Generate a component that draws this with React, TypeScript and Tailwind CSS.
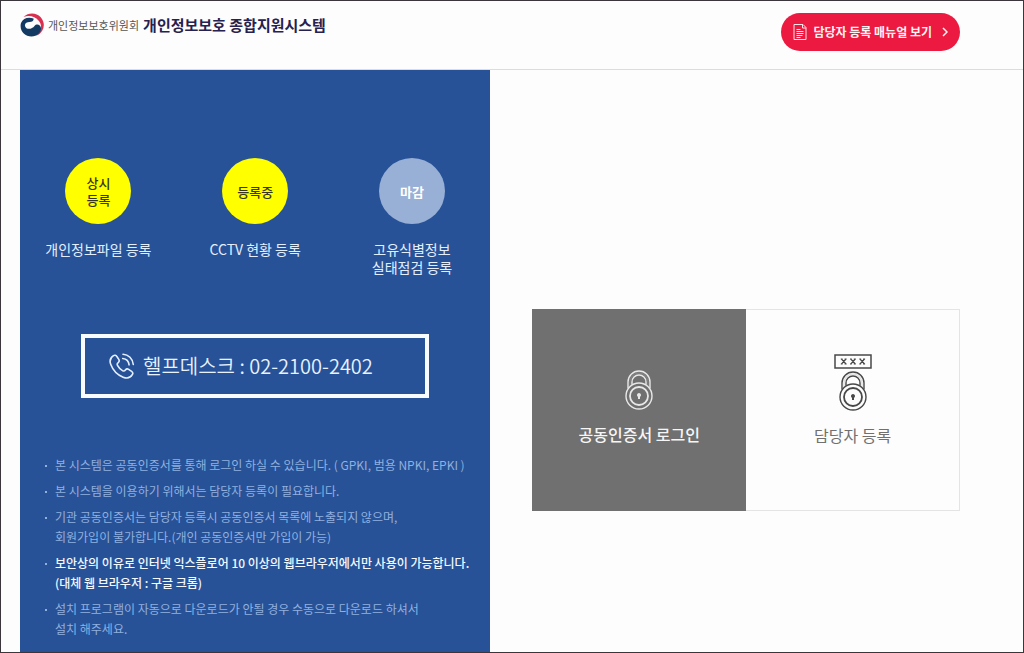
import type { ReactNode } from "react";

type Status = { badge: ReactNode; label: ReactNode; open: boolean };

const statuses: Status[] = [
  { badge: <>상시<br />등록</>, label: "개인정보파일 등록", open: true },
  { badge: "등록중", label: "CCTV 현황 등록", open: true },
  { badge: "마감", label: <>고유식별정보<br />실태점검 등록</>, open: false },
];

const notices: { text: ReactNode; strong?: boolean }[] = [
  { text: "본 시스템은 공동인증서를 통해 로그인 하실 수 있습니다. ( GPKI, 범용 NPKI, EPKI )" },
  { text: "본 시스템을 이용하기 위해서는 담당자 등록이 필요합니다." },
  { text: <>기관 공동인증서는 담당자 등록시 공동인증서 목록에 노출되지 않으며,<br />회원가입이 불가합니다.(개인 공동인증서만 가입이 가능)</> },
  { text: <>보안상의 이유로 인터넷 익스플로어 10 이상의 웹브라우저에서만 사용이 가능합니다.<br />(대체 웹 브라우저 : 구글 크롬)</>, strong: true },
  { text: <>설치 프로그램이 자동으로 다운로드가 안될 경우 수동으로 다운로드 하셔서<br />설치 해주세요.</> },
];

function Emblem() {
  return (
    <svg viewBox="0 0 48 48" className="size-6 shrink-0" aria-hidden="true">
      <path d="M7 8C17-2 33-1 41 8c11 12 8 28-6 37 8-10 10-21 2-30C30 7 19 4 7 8Z" fill="#d9304f" />
      <path d="M27 11C17 7 6 10 2 20-2 35 9 47 23 47c12 0 20-8 19-17-1-7-9-9-13-4-5 7-17 8-19 0-1-6 4-8 9-8 6 0 9-3 8-7Z" fill="#133a63" />
    </svg>
  );
}

function DocumentIcon() {
  return (
    <svg viewBox="0 0 14 18" className="h-[18px] w-3.5" fill="none" stroke="#ffe3e8" aria-hidden="true">
      <path d="M1 1.5h9l3 3v12H1zM9.5 1.5V5H13M3.5 6.5h4M3.5 8.5h7M3.5 10.5h7M3.5 12.5h6M3.5 14.5h4" />
    </svg>
  );
}

function PhoneIcon() {
  return (
    <svg viewBox="0 0 26 26" className="size-[26px]" fill="none" stroke="#e4f0ff" strokeWidth="1.6" strokeLinecap="round" strokeLinejoin="round" aria-hidden="true">
      <path d="M4.5 2.7C1.2 4.8.4 8 1.8 11.5c2 5.4 6.7 10.4 12.3 12.7 3.8 1.500 7.300.7 9.200-2.500.8-1.300.5-2.500-.7-3.300l-3-2c-1.200-.8-2.300-.5-3.200.6-.8 1.100-1.700 1.300-2.900.6-2.200-1.300-3.900-3.100-5-5.200-.6-1.200-.4-2 .7-2.800 1.100-.9 1.300-2 .6-3.200L7.700 3.300C7 2.200 5.700 1.900 4.500 2.700Z" />
      <path d="M14 1.200c5.500.3 9.700 4.500 10.300 10.300M13.700 5.500c3.800.4 6 2.700 6.400 6.400" />
    </svg>
  );
}

function PadlockIcon({ className }: { className: string }) {
  return (
    <svg viewBox="0 0 28 40" className={"h-10 w-7 " + className} fill="none" stroke="currentColor" strokeWidth="1.4" aria-hidden="true">
      <path d="M3 18.500V12a11 11 0 0 1 22 0v6.500M7 14.800V12a7 7 0 0 1 14 0v2.800" />
      <path d="M5 16v-4a9 9 0 0 1 18 0v4" strokeOpacity=".15" />
      <circle cx="14" cy="26" r="13" />
      <circle cx="14" cy="26" r="9" strokeWidth="1.800" />
      <path d="M14 23a2.100 2.100 0 0 0-1 3.900V29h2v-2.100A2.100 2.100 0 0 0 14 23Z" fill="currentColor" stroke="none" />
    </svg>
  );
}

function PasswordIcon() {
  return (
    <svg viewBox="0 0 38 15" className="h-[15px] w-[38px] text-[#484848]" fill="none" stroke="currentColor" strokeWidth="1.5" aria-hidden="true">
      <path d="M1 1h36v13H1z" />
      <path d="M7.500 5l4.500 5m0-5-4.500 5M6.800 5h1.800m2 0h2M6.800 10h1.800m2 0h2M16.800 5l4.500 5m0-5-4.500 5M16 5h1.800m2 0h2M16 10h1.800m2 0h2M26 5l4.500 5m0-5L26 10M25.300 5h1.800m2 0h2M25.300 10h1.800m2 0h2" strokeWidth="1.200" />
    </svg>
  );
}

export default function App() {
  return (
    <div className="flex min-h-screen flex-col border border-[#3b363b] bg-[#fdfdfd] font-['Noto_Sans_CJK_KR',sans-serif]">
      <header className="flex items-start justify-between border-b border-[#dcdcdc] pt-3 pr-[63px] pb-[18px] pl-[19px]">
        <a href="#home" className="flex items-center whitespace-nowrap">
          <Emblem />
          <span className="ml-1 text-[11px] leading-6 text-[#555]">개인정보보호위원회</span>
          <h1 className="ml-1 text-[15px] leading-6 font-bold text-[#252150]">개인정보보호 종합지원시스템</h1>
        </a>
        <a href="#manual" className="flex h-[38px] items-center rounded-full bg-[#ec1a40] px-3 text-xs font-bold whitespace-nowrap text-[#fff3f4]">
          <DocumentIcon />
          <span className="ml-1.5">담당자 등록 매뉴얼 보기</span>
          <svg viewBox="0 0 6 10" className="ml-2.5 h-2.5 w-1.5" fill="none" stroke="currentColor" strokeWidth="1.500" aria-hidden="true">
            <path d="M1 1l4 4-4 4" />
          </svg>
        </a>
      </header>

      <main className="flex grow pl-[19px]">
        <section className="w-[46.9%] shrink-0 bg-[#275298] pt-[88px] pb-3">
          <ul className="grid grid-cols-3">
            {statuses.map((s, i) => (
              <li key={i} className="flex flex-col items-center text-center">
                <div
                  className={
                    "flex size-[66px] items-center justify-center rounded-full text-[13px] leading-[17px] " +
                    (s.open ? "bg-[#ffff00] font-medium text-[#37351c]" : "bg-[#98b0d6] font-bold text-white")
                  }
                >
                  <span>{s.badge}</span>
                </div>
                <p className="mt-4 text-sm leading-[18px] text-[#e3efff]">{s.label}</p>
              </li>
            ))}
          </ul>

          <div className="mx-[61px] mt-[58px] flex h-16 items-center border-4 border-[#f8fcff] pl-6 whitespace-nowrap text-[#e9f3ff]">
            <PhoneIcon />
            <p className="ml-2 text-xl font-[350]">헬프데스크 : 02-2100-2402</p>
          </div>

          <ul className="mt-[57px] flex flex-col gap-1.5 pl-[25px] text-xs leading-5">
            {notices.map((n, i) => (
              <li key={i} className={"flex gap-2 whitespace-nowrap " + (n.strong ? "font-medium text-[#f4f9ff]" : "text-[#91b0df]")}>
                <span className="mt-[10px] size-0.5 shrink-0 bg-[#91b0df]" />
                <span>{n.text}</span>
              </li>
            ))}
          </ul>
        </section>

        <section className="grow pt-[239px] pr-[63px] pl-[42px]">
          <div className="grid h-[202px] grid-cols-2 text-base leading-6">
            <a href="#login" className="flex flex-col items-center bg-[#707070] pt-[61px] font-medium text-[#f6f6f6]">
              <PadlockIcon className="text-[#e8e8e8]" />
              <span className="mt-3">공동인증서 로그인</span>
            </a>
            <a href="#register" className="flex flex-col items-center border border-l-0 border-[#e4e4e4] pt-11 text-[#707070]">
              <PasswordIcon />
              <PadlockIcon className="mt-0.5 text-[#484848]" />
              <span className="mt-3">담당자 등록</span>
            </a>
          </div>
        </section>
      </main>
    </div>
  );
}
